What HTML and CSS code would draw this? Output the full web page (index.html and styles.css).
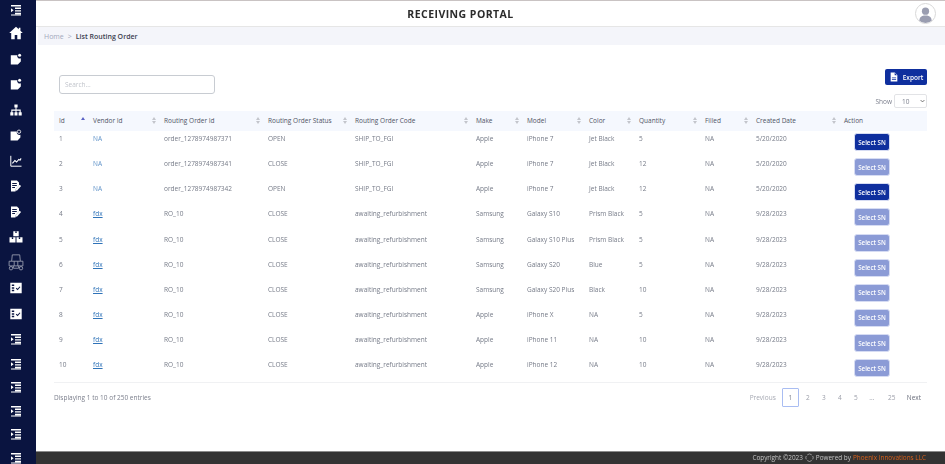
FILE: index.html
```html
<!DOCTYPE html>
<html lang="en">
<head>
  <meta charset="UTF-8">
  <title>Receiving Portal</title>
  <link rel="stylesheet" href="styles.css">
</head>
<body>

  <!-- icon set for the side menu -->
  <svg class="defs" width="0" height="0">
    <symbol id="i-indent" viewBox="0 0 12 12">
      <path d="M1 1h10v1.400H1zM5 3.600h6V5H5zM5 6.200h6v1.400H5zM5 8.800h6v1.400H5zM1 10.400h10v1.200H1zM1 4.200l2.600 2-2.600 2z"/>
    </symbol>
    <symbol id="i-home" viewBox="0 0 12 12">
      <path d="M6 .6.2 6h1.700v5.400h3V7.800h2.200v3.600h3V6h1.700L9.800 4.100V1.400H8.400v1.400z"/>
    </symbol>
    <symbol id="i-note" viewBox="0 0 12 12">
      <path d="M.8 2.200h6.600a2.400 2.400 0 0 0 3.400 3v3.200l-3 3H.8z"/>
      <circle cx="9.600" cy="2.200" r="1.500"/>
    </symbol>
    <symbol id="i-tree" viewBox="0 0 12 12">
      <path d="M4.400.4h3.200v3.200H6.500v2h4.200v2.600h1v3.400H8.600V8.200h1V6.700H6.500v1.500h1v3.400H4.500V8.200h1V6.700H2.400v1.500h1v3.400H.3V8.200h1V5.600h4.200v-2H4.400z"/>
    </symbol>
    <symbol id="i-note-search" viewBox="0 0 12 12">
      <path d="M.6 2.400h6.200a2.800 2.800 0 0 0 3.600 3.400v2.800l-2.800 2.800H.6z"/>
      <circle cx="9" cy="2.700" r="1.700" fill="none" stroke="currentColor" stroke-width=".8"/>
    </symbol>
    <symbol id="i-chart" viewBox="0 0 12 12">
      <path d="M.8.800v10.400h10.700" fill="none" stroke="currentColor" stroke-width="1"/>
      <path d="M2.400 8.400l2.500-2.900 1.700 1.500 2.200-2.600 1.200.8 1.100-1.800" fill="none" stroke="currentColor" stroke-width="1.100"/>
    </symbol>
    <symbol id="i-file" viewBox="0 0 12 12">
      <path d="M1 .5h6l2 2v3l-3.200 3.400-.3 2.600H1zM2.200 3v.9h4.600V3zM2.200 5v.9h4.600V5zM2.200 7v.9h2.800V7z" fill-rule="evenodd"/>
      <path d="M9.600 4.800l1.500 1.300-4 4.300-1.700.3.300-1.700z"/>
    </symbol>
    <symbol id="i-boxes" viewBox="0 0 14 12">
      <path d="M4.300.3h5.400v5H4.300zM.5 6.300h6v5.300h-6zM7.500 6.300h6v5.300h-6z"/>
      <path d="M6.300.3h1.400v1.800H6.300zM2.800 6.300h1.400v1.800H2.800zM9.800 6.300h1.400v1.800H9.800z" fill="#0a1440"/>
    </symbol>
    <symbol id="i-lift" viewBox="0 0 15 16">
      <g fill="none" stroke="currentColor" stroke-width=".8">
        <path d="M4 .8h7l.6 6H3.400zM3.400 6.800H1v4.400h13V6.800h-2.400M5 11.200v2M10 11.200v2M5.800 6.800v4.400M9.200 6.800v4.400M5 13.400h5"/>
        <circle cx="2.800" cy="13.400" r="1.600"/>
        <circle cx="12.200" cy="13.400" r="1.600"/>
      </g>
    </symbol>
    <symbol id="i-check" viewBox="0 0 12 12">
      <path d="M.3.800h11.400v10.400H.3zM1.800 2.600v1.500h2.400V2.600zM1.800 5.200v1.500h2.400V5.200zM1.800 7.800v1.500h2.400V7.800zM5.800 6.500l.8-.8 1 1 2-2.300.8.7-2.800 3.200z" fill-rule="evenodd"/>
    </symbol>
    <symbol id="i-export" viewBox="0 0 12 12">
      <path d="M2 .5h5l3 3v8H2zM6.800 1v2.900h2.800zM3.500 6.600v1h5v-1zM3.500 8.600v1h5v-1z" fill-rule="evenodd"/>
    </symbol>
  </svg>

  <div class="app">
    <nav class="sidebar">
      <a class="side-top"><svg><use href="#i-indent"/></svg></a>
      <a class="side-link"><svg class="big"><use href="#i-home"/></svg></a>
      <a class="side-link"><svg><use href="#i-note"/></svg></a>
      <a class="side-link"><svg><use href="#i-note"/></svg></a>
      <a class="side-link"><svg><use href="#i-tree"/></svg></a>
      <a class="side-link"><svg><use href="#i-note-search"/></svg></a>
      <a class="side-link"><svg><use href="#i-chart"/></svg></a>
      <a class="side-link"><svg><use href="#i-file"/></svg></a>
      <a class="side-link"><svg><use href="#i-file"/></svg></a>
      <a class="side-link"><svg class="big"><use href="#i-boxes"/></svg></a>
      <a class="side-link"><svg class="big dim"><use href="#i-lift"/></svg></a>
      <a class="side-link"><svg><use href="#i-check"/></svg></a>
      <a class="side-link"><svg><use href="#i-check"/></svg></a>
      <a class="side-link"><svg><use href="#i-indent"/></svg></a>
      <a class="side-sub"><svg><use href="#i-indent"/></svg></a>
      <a class="side-sub"><svg><use href="#i-indent"/></svg></a>
      <a class="side-sub"><svg><use href="#i-indent"/></svg></a>
      <a class="side-sub"><svg><use href="#i-indent"/></svg></a>
      <a class="side-sub"><svg><use href="#i-indent"/></svg></a>
    </nav>

    <div class="main">
      <header class="topbar">
        <h1>RECEIVING PORTAL</h1>
        <div class="avatar">
          <svg viewBox="0 0 20 20"><circle cx="10" cy="7.500" r="3.800"/><path d="M3.500 18c0-4.500 2.500-6 6.500-6s6.500 1.500 6.500 6a9.500 9.500 0 0 1-13 0z"/></svg>
        </div>
      </header>

      <div class="crumbs">
        <a>Home</a><span class="sep">&gt;</span><b>List Routing Order</b>
      </div>

      <section class="content">
        <div class="tools">
          <input class="search" type="text" placeholder="Search...">
          <div class="tools-right">
            <button class="btn-export"><svg><use href="#i-export"/></svg>Export</button>
            <label class="show">Show
              <span class="select-wrap">
                <select><option>10</option></select>
                <svg viewBox="0 0 8 5"><path d="M1 1l3 3 3-3" fill="none" stroke="currentColor" stroke-width="1.300"/></svg>
              </span>
            </label>
          </div>
        </div>

        <table class="grid">
          <colgroup>
            <col class="c1"><col class="c2"><col class="c3"><col class="c4"><col class="c5"><col class="c6">
            <col class="c7"><col class="c8"><col class="c9"><col class="c10"><col class="c11"><col class="c12">
          </colgroup>
          <thead>
            <tr>
              <th class="asc">Id</th>
              <th>Vendor Id</th>
              <th>Routing Order Id</th>
              <th>Routing Order Status</th>
              <th>Routing Order Code</th>
              <th>Make</th>
              <th>Model</th>
              <th>Color</th>
              <th>Quantity</th>
              <th>Filled</th>
              <th>Created Date</th>
              <th class="nosort">Action</th>
            </tr>
          </thead>
          <tbody>
            <tr><td>1</td><td class="na">NA</td><td>order_1278974987371</td><td>OPEN</td><td>SHIP_TO_FGI</td><td>Apple</td><td>iPhone 7</td><td>Jet Black</td><td>5</td><td>NA</td><td>5/20/2020</td><td><button class="btn-sn">Select SN</button></td></tr>
            <tr><td>2</td><td class="na">NA</td><td>order_1278974987341</td><td>CLOSE</td><td>SHIP_TO_FGI</td><td>Apple</td><td>iPhone 7</td><td>Jet Black</td><td>12</td><td>NA</td><td>5/20/2020</td><td><button class="btn-sn off">Select SN</button></td></tr>
            <tr><td>3</td><td class="na">NA</td><td>order_1278974987342</td><td>OPEN</td><td>SHIP_TO_FGI</td><td>Apple</td><td>iPhone 7</td><td>Jet Black</td><td>12</td><td>NA</td><td>5/20/2020</td><td><button class="btn-sn">Select SN</button></td></tr>
            <tr><td>4</td><td><a class="vendor">fdx</a></td><td>RO_10</td><td>CLOSE</td><td>awaiting_refurbishment</td><td>Samsung</td><td>Galaxy S10</td><td>Prism Black</td><td>5</td><td>NA</td><td>9/28/2023</td><td><button class="btn-sn off">Select SN</button></td></tr>
            <tr><td>5</td><td><a class="vendor">fdx</a></td><td>RO_10</td><td>CLOSE</td><td>awaiting_refurbishment</td><td>Samsung</td><td>Galaxy S10 Plus</td><td>Prism Black</td><td>5</td><td>NA</td><td>9/28/2023</td><td><button class="btn-sn off">Select SN</button></td></tr>
            <tr><td>6</td><td><a class="vendor">fdx</a></td><td>RO_10</td><td>CLOSE</td><td>awaiting_refurbishment</td><td>Samsung</td><td>Galaxy S20</td><td>Blue</td><td>5</td><td>NA</td><td>9/28/2023</td><td><button class="btn-sn off">Select SN</button></td></tr>
            <tr><td>7</td><td><a class="vendor">fdx</a></td><td>RO_10</td><td>CLOSE</td><td>awaiting_refurbishment</td><td>Samsung</td><td>Galaxy S20 Plus</td><td>Black</td><td>10</td><td>NA</td><td>9/28/2023</td><td><button class="btn-sn off">Select SN</button></td></tr>
            <tr><td>8</td><td><a class="vendor">fdx</a></td><td>RO_10</td><td>CLOSE</td><td>awaiting_refurbishment</td><td>Apple</td><td>iPhone X</td><td>NA</td><td>5</td><td>NA</td><td>9/28/2023</td><td><button class="btn-sn off">Select SN</button></td></tr>
            <tr><td>9</td><td><a class="vendor">fdx</a></td><td>RO_10</td><td>CLOSE</td><td>awaiting_refurbishment</td><td>Apple</td><td>iPhone 11</td><td>NA</td><td>10</td><td>NA</td><td>9/28/2023</td><td><button class="btn-sn off">Select SN</button></td></tr>
            <tr><td>10</td><td><a class="vendor">fdx</a></td><td>RO_10</td><td>CLOSE</td><td>awaiting_refurbishment</td><td>Apple</td><td>iPhone 12</td><td>NA</td><td>10</td><td>NA</td><td>9/28/2023</td><td><button class="btn-sn off">Select SN</button></td></tr>
          </tbody>
        </table>

        <div class="table-foot">
          <span class="info">Displaying 1 to 10 of 250 entries</span>
          <div class="pager">
            <a class="prev">Previous</a>
            <a class="page current">1</a>
            <a class="page">2</a>
            <a class="page">3</a>
            <a class="page">4</a>
            <a class="page">5</a>
            <a class="page">...</a>
            <a class="page wide">25</a>
            <a class="next">Next</a>
          </div>
        </div>
      </section>

      <footer class="footer">
        <span>Copyright ©2023</span>
        <svg viewBox="0 0 12 12"><path d="M3 2.500a4.500 4.500 0 0 1 6 0M10.300 4a4.500 4.500 0 0 1 0 4.500M9 10a4.500 4.500 0 0 1-6 0M1.700 8.500a4.500 4.500 0 0 1 0-4.500" fill="none" stroke="currentColor" stroke-width=".9"/></svg>
        <span>Powered by</span>
        <span class="brand">Phoenix Innovations LLC</span>
      </footer>
    </div>
  </div>

</body>
</html>
```

FILE: styles.css
```css
html, body { margin: 0; height: 100%; }
body { font-family: "Open Sans", sans-serif; font-size: 6.5px; color: #757a87; background: #fff; overflow: hidden; }
.defs { position: absolute; }

/* the source picture is a soft, scaled capture */
.app { display: flex; height: 464px; filter: blur(.3px); }

/* side menu */
.sidebar { width: 36px; flex: none; box-sizing: border-box; padding-right: 5px; background: #0a1440; color: #fff; display: flex; flex-direction: column; align-items: center; overflow: hidden; }
.sidebar a { display: flex; align-items: center; justify-content: center; width: 100%; flex: none; }
.sidebar svg { width: 12px; height: 12px; fill: currentColor; }
.sidebar svg.big { width: 14px; height: 14px; }
.sidebar svg.dim { width: 16px; height: 17px; opacity: .6; }
.side-top { height: 20.500px; }
.side-link { height: 25.500px; }
.side-sub { height: 23.500px; }

.main { flex: 1; min-width: 0; display: flex; flex-direction: column; }

.topbar { height: 27px; box-sizing: border-box; border-top: 1px solid #c9c3c3; border-bottom: 1px solid #e6e6e6; display: flex; align-items: center; justify-content: center; padding-right: 60px; position: relative; }
.topbar h1 { margin: 0; font-size: 10.500px; font-weight: 700; letter-spacing: .45px; color: #2b2b2b; }
.avatar { position: absolute; right: 9px; top: 2px; width: 19px; height: 19px; border: 1px solid #d8d8d8; border-radius: 50%; overflow: hidden; }
.avatar svg { display: block; width: 100%; height: 100%; fill: #9a9db0; }

.crumbs { height: 18px; margin-left: 2px; padding-left: 6px; background: #f4f5fa; display: flex; align-items: center; font-size: 7px; }
.crumbs a { color: #a3a8bc; }
.crumbs .sep { margin: 0 4px; color: #a3a8bc; }
.crumbs b { color: #3c4050; font-weight: 600; }

.content { padding: 24px 18px 0 18px; }

.tools { display: flex; justify-content: space-between; align-items: flex-start; height: 42px; }
.search { width: 156px; height: 19px; box-sizing: border-box; margin: 6px 0 0 5px; padding: 0 5px; border: 1px solid #c8ccd2; border-radius: 3px; font-family: inherit; font-size: 6.500px; outline: none; }
.search::placeholder { color: #c2c5cc; }
.tools-right { display: flex; flex-direction: column; align-items: flex-end; }
.btn-export { width: 42px; height: 16px; display: flex; align-items: center; justify-content: center; gap: 4px; padding: 0; border: none; border-radius: 2px; background: #0f2f9e; color: #fff; font-family: inherit; font-size: 6.500px; font-weight: 600; }
.btn-export svg { width: 10px; height: 10px; fill: currentColor; }
.show { margin-top: 9px; display: flex; align-items: center; gap: 2px; font-size: 6.500px; color: #7b7f8c; }
.select-wrap { position: relative; display: block; height: 14px; }
.select-wrap select { display: block; width: 33px; height: 14px; appearance: none; padding: 0 0 0 7px; border: 1px solid #e2e3e6; border-radius: 2px; background: #fff; color: #7b7f8c; font-family: inherit; font-size: 6.500px; }
.select-wrap svg { position: absolute; right: 2px; top: 5px; width: 5px; height: 4px; color: #555; }

.grid { width: 873px; table-layout: fixed; border-collapse: collapse; }
.grid .c1 { width: 34px; }
.grid .c2 { width: 71px; }
.grid .c3 { width: 104px; }
.grid .c4 { width: 87px; }
.grid .c5 { width: 121px; }
.grid .c6 { width: 51px; }
.grid .c7 { width: 62px; }
.grid .c8 { width: 50px; }
.grid .c9 { width: 66px; }
.grid .c10 { width: 51px; }
.grid .c11 { width: 88px; }
.grid .c12 { width: 88px; }
.grid th { height: 20px; box-sizing: border-box; padding: 0 5px 2px; background: #f5f8fe; color: #4f5465; font-weight: 500; text-align: left; position: relative; }
/* sort arrows, two small triangles */
.grid th::before, .grid th::after { content: ""; position: absolute; right: 3px; border-left: 2px solid transparent; border-right: 2px solid transparent; }
.grid th::before { top: 6px; border-bottom: 3px solid #c3c5cc; }
.grid th::after { top: 10px; border-top: 3px solid #c3c5cc; }
.grid th.asc::before { border-bottom-color: #5a62c4; }
.grid th.asc::after { border-top-color: transparent; }
.grid th.nosort::before, .grid th.nosort::after { content: none; }
.grid td { height: 25.150px; box-sizing: border-box; padding: 3px 5px 0; vertical-align: top; line-height: 10px; white-space: nowrap; }
.grid tbody tr:last-child td { border-bottom: 1px solid #f0f1f3; }
.na { color: #5f92c8; }
.vendor { color: #2f73b8; text-decoration: underline; }

.btn-sn { display: block; width: 36px; height: 18px; margin: -1px 0 0 10px; padding: 0; border: 1px solid #d6dcf3; border-radius: 3px; background: #0f2f9e; color: #fff; font-family: inherit; font-size: 6.200px; font-weight: 600; }
.btn-sn.off { background: #8b9bd6; }

.table-foot { display: flex; justify-content: space-between; align-items: center; height: 30px; }
.info { color: #7b7f8c; }
.pager { display: flex; align-items: center; margin-right: 6px; color: #9a9da8; }
.pager a { display: block; text-align: center; }
.pager .prev { margin-right: 6px; color: #a5a8b2; }
.pager .page { width: 16px; line-height: 17px; }
.pager .wide { width: 22px; margin-left: 1px; }
.pager .current { width: 15px; margin-right: 1px; border: 1px solid #a9bdf2; border-radius: 1px; color: #7b7f8c; }
.pager .next { margin-left: 4px; color: #6a6e7c; }

.footer { margin-top: auto; height: 13px; box-sizing: border-box; padding: 0 19px 1px 0; border-top: 1px solid #8a8a8a; background: #333; color: #c4c4c4; display: flex; align-items: center; justify-content: flex-end; gap: 2px; font-size: 6.400px; white-space: nowrap; }
.footer svg { width: 9px; height: 9px; }
.brand { color: #d9601a; }
```
